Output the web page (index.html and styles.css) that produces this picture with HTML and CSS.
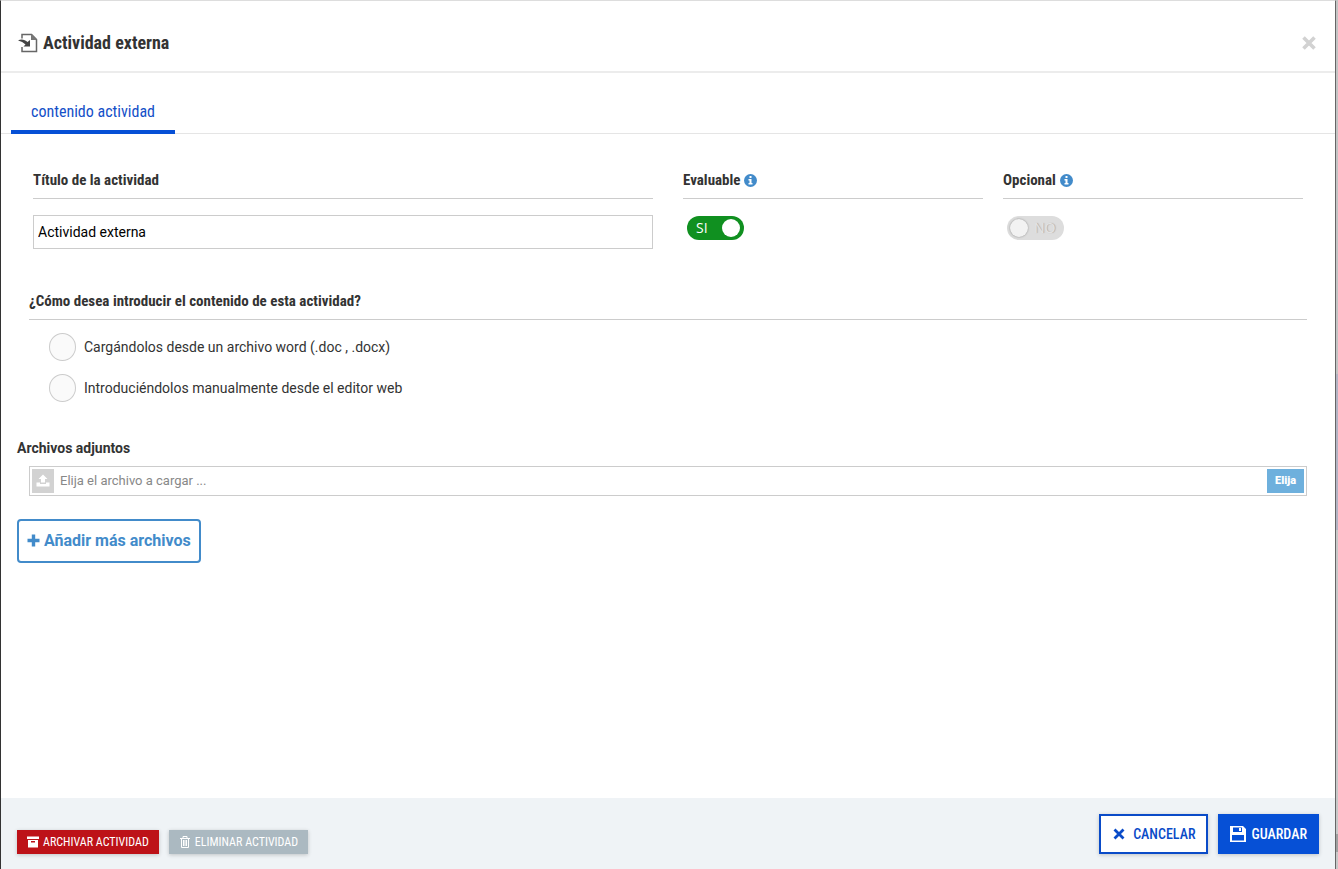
FILE: index.html
```html
<!DOCTYPE html>
<html lang="es">
<head>
<meta charset="UTF-8">
<meta name="viewport" content="width=device-width, initial-scale=1.0">
<title>Actividad externa</title>
<link rel="stylesheet" href="styles.css">
</head>
<body>

<form class="modal">
    <header class="modal-header">
        <svg class="icon-external" width="20" height="20" viewBox="0 0 20 20">
            <path d="M4 5.500V1.500H13.500L18.500 6.500V18.500H4V14" fill="none" stroke="#666" stroke-width="1.500"/>
            <path d="M13 1.500H14L18.500 6V7H13z" fill="#777"/>
            <path d="M0 7.500C3 5.800 7 6.500 9.500 9L12 7V13.500H5.500L7.500 11.500C5.500 9.500 3 8.200 0 7.500Z" fill="#444"/>
        </svg>
        <h1>Actividad externa</h1>
        <button type="button" class="close" aria-label="Cerrar">
            <svg width="14" height="14" viewBox="0 0 14 14"><path d="M1.500 1.500L12.500 12.500M12.500 1.500L1.500 12.500" stroke="#d2d2d2" stroke-width="3.600"/></svg>
        </button>
    </header>

    <nav class="tabs">
        <a href="#contenido" class="tab">contenido actividad</a>
    </nav>

    <main class="modal-body" id="contenido">
        <div class="fields">
            <div class="field field-title">
                <label class="heading" for="titulo">Título de la actividad</label>
                <input type="text" id="titulo" class="text-input" value="Actividad externa">
            </div>
            <div class="field">
                <label class="heading" for="evaluable">Evaluable
                    <svg class="info" width="13" height="13" viewBox="0 0 13 13"><circle cx="6.500" cy="6.500" r="6.500" fill="#428bca"/><path d="M5.500 2h2v2h-2zM4.500 5h3v4h1v1.500h-4V9h1V6.500h-1z" fill="#fff"/></svg>
                </label>
                <label class="switch">
                    <input type="checkbox" id="evaluable" checked>
                    <span>SI</span>
                </label>
            </div>
            <div class="field">
                <label class="heading" for="opcional">Opcional
                    <svg class="info" width="13" height="13" viewBox="0 0 13 13"><circle cx="6.500" cy="6.500" r="6.500" fill="#428bca"/><path d="M5.500 2h2v2h-2zM4.500 5h3v4h1v1.500h-4V9h1V6.500h-1z" fill="#fff"/></svg>
                </label>
                <label class="switch switch-off">
                    <input type="checkbox" id="opcional" disabled>
                    <span>NO</span>
                </label>
            </div>
        </div>

        <fieldset class="source">
            <legend class="heading">¿Cómo desea introducir el contenido de esta actividad?</legend>
            <label class="option"><input type="radio" name="origen" value="word">Cargándolos desde un archivo word (.doc , .docx)</label>
            <label class="option"><input type="radio" name="origen" value="editor">Introduciéndolos manualmente desde el editor web</label>
        </fieldset>

        <section class="attachments">
            <label class="attachments-title" for="archivo">Archivos adjuntos</label>
            <div class="file-box">
                <span class="file-icon">
                    <svg width="14" height="14" viewBox="0 0 14 14" fill="#fff"><path d="M7 0.500L11.500 5H9V8.500H5V5H2.500zM0.500 8.500H4V10H10V8.500H13.500V12.500H0.500z"/></svg>
                </span>
                <input type="text" id="archivo" class="file-name" placeholder="Elija el archivo a cargar ..." readonly>
                <button type="button" class="file-button">Elija</button>
            </div>
            <button type="button" class="add-button">
                <svg width="13" height="13" viewBox="0 0 13 13"><path d="M6.500 0.500V12.500M0.500 6.500H12.500" stroke="#428bca" stroke-width="3.400"/></svg>
                Añadir más archivos
            </button>
        </section>
    </main>

    <footer class="modal-footer">
        <div class="footer-left">
            <button type="button" class="small-button archive">
                <svg width="12" height="12" viewBox="0 0 12 12" fill="#fff"><path d="M0 0.500H12V3H0z"/><path fill-rule="evenodd" d="M1 4H11V11.500H1zM4 5V6.500H8V5z"/></svg>
                ARCHIVAR ACTIVIDAD
            </button>
            <button type="button" class="small-button delete">
                <svg width="12" height="12" viewBox="0 0 12 12" fill="none" stroke="#fff"><path d="M1 2.500H11M4 2V0.500H8V2M2.500 3V11.500H9.500V3M4.500 4V10M6 4V10M7.500 4V10"/></svg>
                ELIMINAR ACTIVIDAD
            </button>
        </div>
        <div class="footer-right">
            <button type="button" class="main-button cancel">
                <svg width="12" height="12" viewBox="0 0 12 12"><path d="M1.500 1.500L10.500 10.500M10.500 1.500L1.500 10.500" stroke="#0a4bc8" stroke-width="2.800"/></svg>
                CANCELAR
            </button>
            <button type="submit" class="main-button save">
                <svg width="16" height="16" viewBox="0 0 16 16"><path fill="#fff" fill-rule="evenodd" d="M0 0H13L16 3V16H0zM2 9V14.500H14V9zM3 1.500V6H12V1.500zM9 2H11V5H9z"/></svg>
                GUARDAR
            </button>
        </div>
    </footer>
</form>

</body>
</html>
```
FILE: styles.css
```css
* {
    box-sizing: border-box;
}
body {
    margin: 0;
    padding-right: 2px;
    background: linear-gradient(#c4c4c4 43%, #b4b4c4 43%, #b4b4c4 61%, #c8c8c8 61%, #c8c8c8 96%, #a0a0a0 96%, #a0a0a0 98%, #c8c8c8 98%);
    font-family: Roboto, sans-serif;
    font-size: 14px;
    color: #333;
}
button, input {
    font-family: inherit;
}
button {
    cursor: pointer;
}
.modal {
    display: flex;
    flex-direction: column;
    min-height: 100vh;
    background-color: #fff;
    border-top: 1px solid #ddd;
    border-left: 1px solid #333;
    border-right: 1px solid #666;
}
.modal-header {
    display: flex;
    align-items: center;
    height: 72px;
    padding: 14px 19px 0 17px;
    border-bottom: 2px solid #ececec;
}
.modal-header h1 {
    flex: 1;
    margin: 0 0 0 5px;
    font-family: "Roboto Condensed", Roboto, sans-serif;
    font-size: 18px;
    line-height: 24px;
}
.close {
    display: flex;
    padding: 0;
    border: none;
    background: none;
}
.tabs {
    display: flex;
    padding: 19px 0 0 10px;
    border-bottom: 1px solid #e5e5e5;
}
.tab {
    margin-bottom: -1px;
    padding: 10px 20px 8px;
    border-bottom: 4px solid #0650d6;
    font-family: "Roboto Condensed", Roboto, sans-serif;
    font-size: 16px;
    line-height: 20px;
    color: #1450c8;
    text-decoration: none;
}
.modal-body {
    flex: 1;
}
.heading {
    display: flex;
    align-items: center;
    gap: 4px;
    width: 100%;
    padding: 0 0 8px;
    border-bottom: 1px solid #ccc;
    font-family: "Roboto Condensed", Roboto, sans-serif;
    font-size: 15px;
    font-weight: bold;
    line-height: 20px;
}
.fields {
    display: grid;
    grid-template-columns: 21fr 10fr 10fr;
    gap: 20px;
    padding: 36px 32px 0;
}
.field-title {
    padding-right: 10px;
}
.text-input {
    width: 100%;
    height: 34px;
    margin-top: 16px;
    padding: 0 4px;
    border: 1px solid #ccc;
    font-size: 14px;
    color: #000;
}
.switch {
    position: relative;
    display: block;
    width: 57px;
    height: 24px;
    margin: 17px 4px 0;
    font-family: "Open Sans", sans-serif;
    font-weight: 400;
    line-height: 24px;
    color: #fff;
}
.switch input {
    appearance: none;
    display: block;
    width: 100%;
    height: 100%;
    margin: 0;
    padding: 3px 4px 3px 3px;
    border-radius: 12px;
    background-color: #109020;
}
.switch input::before {
    content: "";
    display: block;
    width: 18px;
    height: 18px;
    border-radius: 50%;
    background-color: #fff;
}
.switch input:checked::before {
    margin-left: auto;
}
.switch span {
    position: absolute;
    top: 0;
    left: 9px;
}
.switch-off input {
    background-color: #ddd;
}
.switch-off input::before {
    background-color: #f2f2f2;
    box-shadow: 0 0 2px #888;
}
.switch-off span {
    left: 27px;
    color: #e4e4e4;
    text-shadow: 1px 0 1px #aaa;
}
.source {
    margin: 42px 28px 0;
    padding: 0;
    border: none;
}
.source .heading {
    margin-bottom: 13px;
}
.option {
    display: flex;
    align-items: center;
    gap: 8px;
    width: fit-content;
    margin: 0 0 13px 20px;
    line-height: 20px;
}
.option input {
    appearance: none;
    width: 27px;
    height: 28px;
    margin: 0;
    border: 1px solid #ccc;
    border-radius: 50%;
    background-color: #fafafa;
}
.attachments {
    padding: 23px 28px 0 16px;
}
.attachments-title {
    display: block;
    font-weight: 700;
    line-height: 20px;
}
.file-box {
    display: flex;
    align-items: center;
    height: 30px;
    margin: 8px 0 23px 12px;
    padding: 2px;
    border: 1px solid #ccc;
}
.file-icon {
    display: flex;
    align-items: center;
    justify-content: center;
    width: 22px;
    height: 24px;
    background-color: #d2d2d2;
}
.file-name {
    flex: 1;
    height: 24px;
    padding: 0 6px 2px;
    border: none;
    outline: none;
    font-size: 13px;
}
.file-name::placeholder {
    color: #888;
}
.file-button {
    width: 37px;
    height: 24px;
    padding: 0 0 2px;
    border: none;
    background-color: #6eb0dd;
    font-size: 11px;
    font-weight: 900;
    color: #fff;
}
.add-button {
    display: flex;
    align-items: center;
    gap: 4px;
    height: 44px;
    padding: 0 8px 2px;
    border: 2px solid #428bca;
    border-radius: 4px;
    background-color: #fff;
    font-size: 16px;
    font-weight: 700;
    color: #428bca;
}
.modal-footer {
    display: flex;
    align-items: flex-end;
    justify-content: space-between;
    padding: 16px 16px 15px;
    background-color: #eff3f6;
}
.footer-left, .footer-right {
    display: flex;
    gap: 10px;
}
.small-button, .main-button {
    display: flex;
    align-items: center;
    border: none;
    font-family: "Roboto Condensed", Roboto, sans-serif;
    color: #fff;
    box-shadow: 0 1px 4px rgba(0, 0, 0, 0.2);
}
.small-button {
    gap: 4px;
    height: 24px;
    padding: 0 10px;
    font-size: 12px;
}
.archive {
    background-color: #bd1218;
}
.delete {
    background-color: #abb9c1;
}
.main-button {
    height: 40px;
    padding: 0 12px;
    font-size: 14px;
    font-weight: 500;
}
.cancel {
    gap: 8px;
    padding: 0 10px 0 12px;
    border: 2px solid #0a4bc8;
    background-color: #fff;
    color: #0a4bc8;
}
.save {
    gap: 6px;
    background-color: #0650d6;
}
```
